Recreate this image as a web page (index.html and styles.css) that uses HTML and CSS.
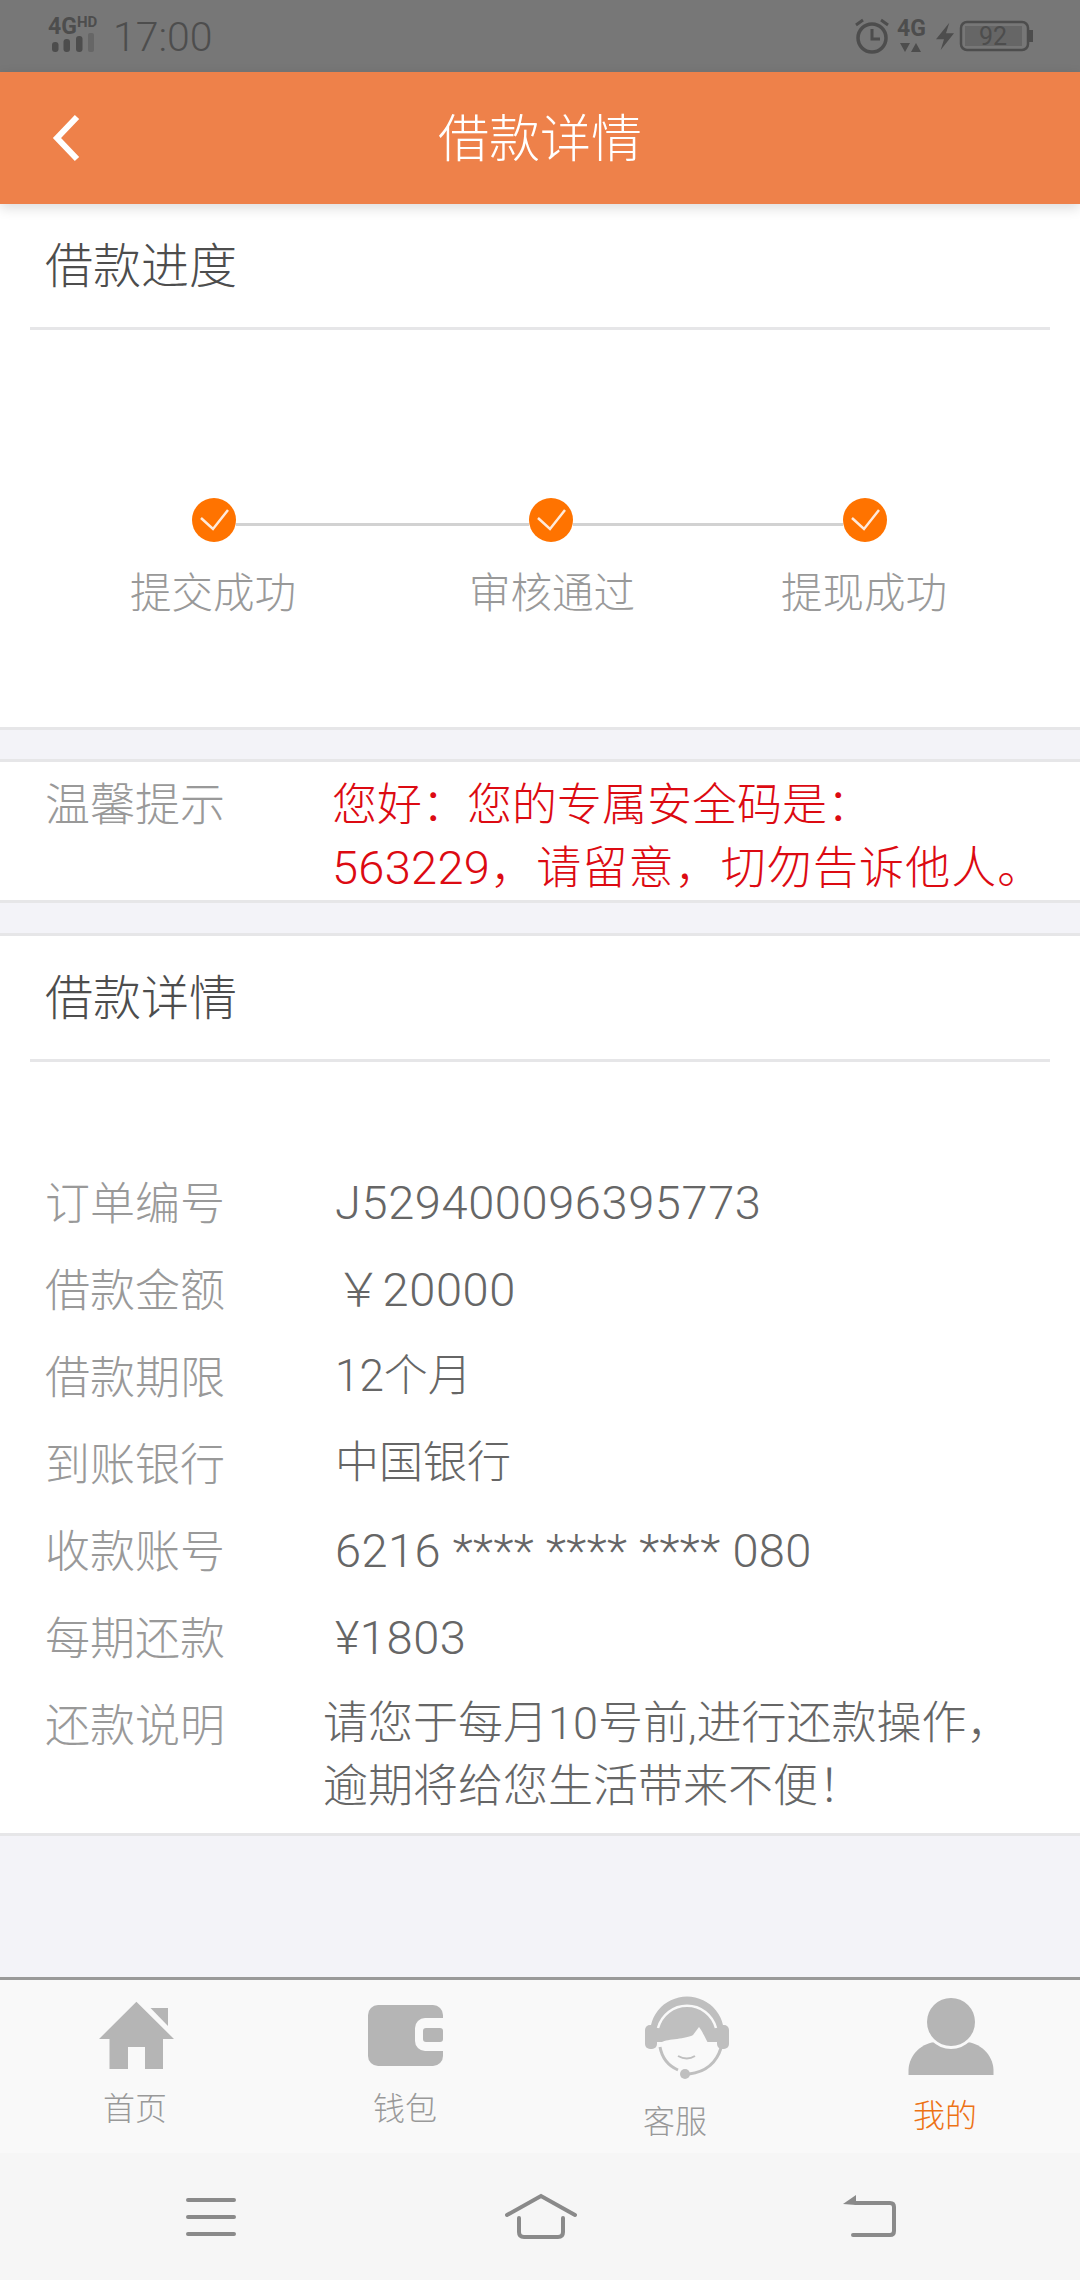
FILE: index.html
```html
<!DOCTYPE html>
<html lang="zh-CN">
  <head>
    <meta charset="UTF-8" />
    <title>借款详情</title>
    <link rel="stylesheet" href="styles.css">
  </head>
  <body>
    <div class="page">
      <div class="status-bar">
        <div class="status-left">
          <svg class="status-signal" width="60" height="60" viewBox="0 0 60 60">
            <text x="0" y="27" class="sig-big">4G</text>
            <text x="29" y="20" class="sig-small">HD</text>
            <rect x="4" y="35" width="6.500" height="10" rx="3" fill="#4d4d4d" />
            <rect x="15.500" y="32" width="6.500" height="13" rx="3" fill="#4d4d4d" />
            <rect x="28" y="29" width="6.500" height="16" rx="3" fill="#4d4d4d" />
            <rect x="40" y="26" width="6" height="19" rx="2" fill="#666" />
          </svg>
          <span class="status-time">17:00</span>
        </div>
        <svg class="status-right" width="180" height="50" viewBox="0 0 180 50">
          <circle cx="18" cy="25" r="14" fill="none" stroke="#4d4d4d" stroke-width="3.500" />
          <path d="M18 16v10h8" fill="none" stroke="#4d4d4d" stroke-width="3" />
          <path d="M2 12l7-5M34 12l-7-5" stroke="#4d4d4d" stroke-width="3" />
          <text x="43" y="23" class="sig-4g">4G</text>
          <path d="M46 30h10l-5 9zM57 39l5-9 5 9z" fill="#4d4d4d" />
          <path d="M95.300 9.700L82 26.300h8L86.700 37 100 20.300h-8z" fill="#4d4d4d" />
          <rect x="107" y="9" width="67" height="28" rx="6" fill="none" stroke="#4d4d4d" stroke-width="2.500" />
          <rect x="111" y="13" width="57" height="20" fill="#666" />
          <rect x="175" y="17" width="4" height="12" fill="#4d4d4d" />
          <text x="139" y="32" class="battery-num">92</text>
        </svg>
      </div>

      <div class="top-bar">
        <div class="back-btn">
          <svg width="40" height="60" viewBox="0 0 40 60">
            <path d="M26 3L6 24l20 21" transform="translate(0 6)" fill="none" stroke="#fff" stroke-width="6" />
          </svg>
        </div>
        <div class="top-title">借款详情</div>
        <div class="back-btn"></div>
      </div>

      <div class="section section-progress">
        <div class="section-title">借款进度</div>
        <div class="track">
          <svg class="check" width="44" height="44" viewBox="0 0 44 44">
            <circle cx="22" cy="22" r="22" fill="#ff7300" />
            <path d="M9 20l12 11L36 12" fill="none" stroke="#ffeadb" stroke-width="2.500" />
          </svg>
          <div class="track-line track-line-a"></div>
          <svg class="check" width="44" height="44" viewBox="0 0 44 44">
            <circle cx="22" cy="22" r="22" fill="#ff7300" />
            <path d="M9 20l12 11L36 12" fill="none" stroke="#ffeadb" stroke-width="2.500" />
          </svg>
          <div class="track-line track-line-b"></div>
          <svg class="check" width="44" height="44" viewBox="0 0 44 44">
            <circle cx="22" cy="22" r="22" fill="#ff7300" />
            <path d="M9 20l12 11L36 12" fill="none" stroke="#ffeadb" stroke-width="2.500" />
          </svg>
        </div>
        <div class="track-labels">
          <span>提交成功</span>
          <span>审核通过</span>
          <span>提现成功</span>
        </div>
      </div>

      <div class="section section-tip">
        <div class="tip-label">温馨提示</div>
        <div class="tip-text">您好：您的专属安全码是：<br /><span class="tip-line"><span class="tip-code">563229</span>，请留意，切勿告诉他人。</span></div>
      </div>

      <div class="section section-detail">
        <div class="section-title">借款详情</div>
        <div class="rows">
          <div class="row"><div class="row-label">订单编号</div><div class="row-value num">J529400096395773</div></div>
          <div class="row"><div class="row-label">借款金额</div><div class="row-value num">￥20000</div></div>
          <div class="row"><div class="row-label">借款期限</div><div class="row-value">12个月</div></div>
          <div class="row"><div class="row-label">到账银行</div><div class="row-value">中国银行</div></div>
          <div class="row"><div class="row-label">收款账号</div><div class="row-value num num-card">6216 **** **** **** 080</div></div>
          <div class="row"><div class="row-label">每期还款</div><div class="row-value num">¥1803</div></div>
          <div class="row">
            <div class="row-label">还款说明</div>
            <div class="row-note">请您于每月10号前,进行还款操作，<br />逾期将给您生活带来不便！</div>
          </div>
        </div>
      </div>

      <div class="tab-bar">
        <div class="tab">
          <svg class="tab-icon" viewBox="0 0 100 90">
            <path d="M51.400 9.700L89 47H78v30H60V55H43v22H24.500V47H14z" fill="#b5b5b5" />
            <path d="M65.500 16H83v18z" fill="#b5b5b5" />
          </svg>
          <div class="tab-label">首页</div>
        </div>
        <div class="tab">
          <svg class="tab-icon" viewBox="0 0 100 90">
            <rect x="13" y="13" width="75" height="61" rx="10" fill="#b5b5b5" />
            <rect x="60" y="26" width="40" height="33" rx="10" fill="#f9f9f9" />
            <rect x="68" y="36" width="20" height="14" rx="3" fill="#b5b5b5" />
          </svg>
          <div class="tab-label">钱包</div>
        </div>
        <div class="tab tab-service">
          <svg class="tab-icon" viewBox="0 0 100 90">
            <path d="M14 50A37 37 0 1 1 86 50z" fill="#bfbfbf" />
            <rect x="8" y="33" width="12" height="24" rx="5" fill="#bfbfbf" />
            <rect x="80" y="33" width="12" height="24" rx="5" fill="#bfbfbf" />
            <path d="M21 36A30 30 0 0 1 79 36" fill="none" stroke="#f9f9f9" stroke-width="2.500" />
            <path d="M25 50c5-3 25-3 31-7l6-8c4 5 8 15 14 25-2 12-14 18-26 18-14 0-24-12-25-28z" fill="#f9f9f9" />
            <path d="M23 55c2 11 9 19 18 23" fill="none" stroke="#bfbfbf" stroke-width="3" />
            <path d="M84 56c-4 13-14 24-32 26" fill="none" stroke="#bfbfbf" stroke-width="3" />
            <circle cx="48" cy="82" r="5" fill="#bfbfbf" />
            <path d="M41 64q9 5 17 0" fill="none" stroke="#bfbfbf" stroke-width="2" />
          </svg>
          <div class="tab-label">客服</div>
        </div>
        <div class="tab tab-mine">
          <svg class="tab-icon" viewBox="0 0 100 90">
            <path d="M7.500 83v-5C8 62 22 50 36 50h28c14 0 28 12 28.500 28v5z" fill="#b5b5b5" />
            <circle cx="50" cy="30" r="27" fill="#f9f9f9" />
            <circle cx="50" cy="30" r="24" fill="#b5b5b5" />
          </svg>
          <div class="tab-label">我的</div>
        </div>
      </div>

      <div class="sys-nav">
        <svg width="80" height="60" viewBox="0 0 80 60">
          <path d="M17 10h46M17 27h46M17 44h46" stroke="#8a8a8a" stroke-width="4" stroke-linecap="round" />
        </svg>
        <svg width="80" height="60" viewBox="0 0 80 60">
          <path d="M6 25L40 6l34 19" fill="none" stroke="#8a8a8a" stroke-width="4" stroke-linecap="round" />
          <path d="M18 28v14q0 5 5 5h34q5 0 5-5V28" fill="none" stroke="#8a8a8a" stroke-width="4" stroke-linecap="round" />
        </svg>
        <svg width="80" height="60" viewBox="0 0 80 60">
          <path d="M28 13h34q4 0 4 4v24q0 4-4 4H25" fill="none" stroke="#8a8a8a" stroke-width="4" stroke-linecap="round" />
          <path d="M15 14l13-9v10z" fill="#8a8a8a" />
        </svg>
      </div>
    </div>
  </body>
</html>
```

FILE: styles.css
```css
* {
  box-sizing: border-box;
}
body {
  margin: 0;
  font-family: Roboto, "Noto Sans CJK SC", sans-serif;
  font-weight: 300;
}
.page {
  display: flex;
  flex-direction: column;
  width: 1080px;
  height: 2280px;
  overflow: hidden;
  background-color: #f3f3f8;
}

/* status bar */
.status-bar {
  display: flex;
  justify-content: space-between;
  align-items: center;
  height: 72px;
  padding: 0 46px 0 48px;
  background-color: #777;
}
.status-left {
  display: flex;
  align-items: center;
}
.status-signal {
  margin-top: 2px;
}
.status-time {
  margin-left: 5px;
  padding-top: 2px;
  font-size: 41px;
  color: #4d4d4d;
}
.status-right {
  margin-top: 4px;
}
.sig-big {
  font: 700 23px Roboto, sans-serif;
  fill: #4d4d4d;
}
.sig-small {
  font: 700 15px Roboto, sans-serif;
  fill: #4d4d4d;
}
.sig-4g {
  font: 700 23px Roboto, sans-serif;
  fill: #4d4d4d;
}
.battery-num {
  font: 400 25px Roboto, sans-serif;
  fill: #4d4d4d;
  text-anchor: middle;
}

/* header */
.top-bar {
  position: relative;
  display: flex;
  align-items: center;
  height: 132px;
  background-color: #ee814a;
  box-shadow: 0 4px 12px rgba(0, 0, 0, 0.14);
}
.back-btn {
  width: 90px;
  padding-left: 51px;
}
.back-btn svg {
  display: block;
}
.top-title {
  flex: 1;
  padding-bottom: 6px;
  text-align: center;
  font-size: 51px;
  color: #fff;
}

/* sections */
.section {
  background-color: #fff;
  border-top: 3px solid #e6e6e8;
  border-bottom: 3px solid #e6e6e8;
}
.section-title {
  height: 126px;
  margin: 0 30px;
  padding-left: 15px;
  line-height: 125px;
  font-size: 48px;
  color: #4d4d4d;
  border-bottom: 3px solid #e6e6e8;
}
.section-progress {
  height: 526px;
  border-top: 0;
}
.track {
  display: flex;
  align-items: center;
  padding: 168px 0 0 192px;
}
.check {
  flex: none;
}
.track-line {
  height: 3px;
  margin-top: 8px;
  background-color: #d2d2d2;
}
.track-line-a {
  width: 293px;
}
.track-line-b {
  width: 270px;
}
.track-labels {
  display: flex;
  gap: 173px;
  margin-top: 27px;
  padding-left: 130px;
  line-height: 50px;
  font-size: 41.500px;
  color: #999;
}
.track-labels span + span + span {
  margin-left: -27px;
}
.section-tip {
  display: flex;
  height: 144px;
  margin-top: 29px;
  padding: 13px 0 0 45px;
}
.tip-label {
  width: 287px;
  line-height: 62px;
  font-size: 45px;
  color: #999;
}
.tip-text {
  line-height: 62px;
  font-size: 45px;
  color: #dc0a12;
  white-space: nowrap;
}
.tip-line {
  letter-spacing: 1.1px;
}
.tip-code {
  font-size: 47px;
  letter-spacing: 0.3px;
}
.section-detail {
  height: 903px;
  margin-top: 30px;
}
.rows {
  padding: 99px 0 0 45px;
}
.row {
  display: flex;
  min-height: 87px;
  font-size: 45px;
  line-height: 87px;
}
.row-label {
  width: 290px;
  color: #999;
}
.row-value {
  margin-top: -2px;
  color: #666;
  font-size: 44px;
  white-space: nowrap;
}
.num {
  font-size: 47px;
  letter-spacing: 0.6px;
}
.num-card {
  letter-spacing: 0.4px;
}
.row-note {
  margin: 9px 0 0 -12px;
  line-height: 63px;
  color: #666;
  white-space: nowrap;
}

/* tab bar */
.tab-bar {
  display: grid;
  grid-template-columns: repeat(4, 270px);
  height: 176px;
  margin-top: auto;
  padding-top: 12px;
  background-color: #f9f9f9;
  border-top: 3px solid #999;
}
.tab {
  display: flex;
  flex-direction: column;
  align-items: center;
}
.tab-icon {
  flex: none;
  width: 100px;
  height: 90px;
}
.tab-label {
  margin-top: 7px;
  line-height: 40px;
  font-size: 32px;
  color: #999;
}
.tab-service .tab-icon {
  margin-left: 24px;
  filter: blur(0.7px);
}
.tab-service .tab-label {
  margin-top: 20px;
}
.tab-mine .tab-icon {
  margin-left: 11px;
}
.tab-mine .tab-label {
  margin-top: 14px;
  color: #ed7215;
}

/* system nav */
.sys-nav {
  display: grid;
  grid-template-columns: 330px 327px 1fr;
  height: 127px;
  padding: 37px 0 0 171px;
  background-color: #f6f6f6;
}
```
